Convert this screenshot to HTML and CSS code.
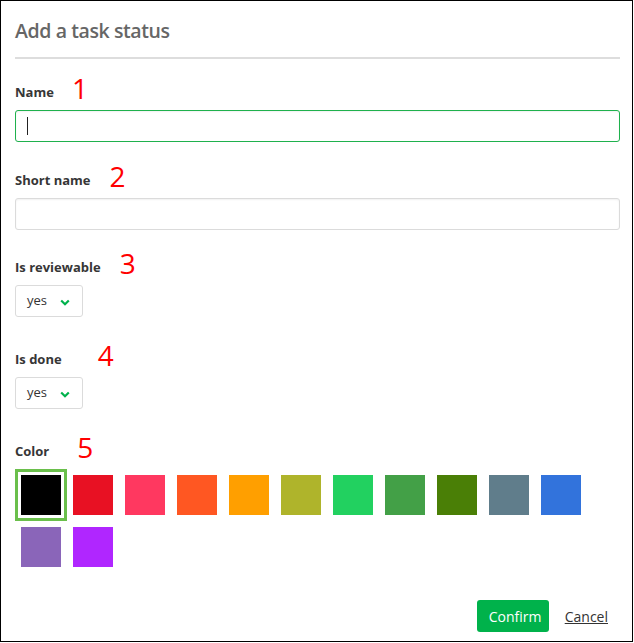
FILE: index.html
```html
<!DOCTYPE html>
<html lang="en">
<head>
<meta charset="utf-8">
<title>Add a task status</title>
<link rel="stylesheet" href="styles.css">
</head>
<body>
<div class="dialog">
  <header class="dialog-header">
    <h1 class="dialog-title">Add a task status</h1>
  </header>

  <div class="field field-text">
    <div class="label-row"><span class="label">Name</span><span class="mark mark-1">1</span></div>
    <div class="input input-focused"><span class="caret"></span></div>
  </div>

  <div class="field field-text">
    <div class="label-row"><span class="label">Short name</span><span class="mark mark-2">2</span></div>
    <div class="input"></div>
  </div>

  <div class="field field-select">
    <div class="label-row"><span class="label">Is reviewable</span><span class="mark mark-3">3</span></div>
    <div class="select"><span class="select-value">yes</span>
      <svg class="chevron" width="10" height="7" viewBox="0 0 10 7"><path d="M1.2 1.5 L5 5.2 L8.8 1.5" fill="none" stroke="#00b24c" stroke-width="2.2"/></svg>
    </div>
  </div>

  <div class="field field-select">
    <div class="label-row"><span class="label">Is done</span><span class="mark mark-4">4</span></div>
    <div class="select"><span class="select-value">yes</span>
      <svg class="chevron" width="10" height="7" viewBox="0 0 10 7"><path d="M1.2 1.5 L5 5.2 L8.8 1.5" fill="none" stroke="#00b24c" stroke-width="2.2"/></svg>
    </div>
  </div>

  <div class="field field-color">
    <div class="label-row"><span class="label">Color</span><span class="mark mark-5">5</span></div>
    <div class="swatches">
      <div class="swatch selected"><span class="chip c-black"></span></div>
      <div class="swatch"><span class="chip c-red"></span></div>
      <div class="swatch"><span class="chip c-pink"></span></div>
      <div class="swatch"><span class="chip c-orange"></span></div>
      <div class="swatch"><span class="chip c-amber"></span></div>
      <div class="swatch"><span class="chip c-olive"></span></div>
      <div class="swatch"><span class="chip c-green"></span></div>
      <div class="swatch"><span class="chip c-mgreen"></span></div>
      <div class="swatch"><span class="chip c-dgreen"></span></div>
      <div class="swatch"><span class="chip c-slate"></span></div>
      <div class="swatch"><span class="chip c-blue"></span></div>
      <div class="swatch"><span class="chip c-purple"></span></div>
      <div class="swatch"><span class="chip c-violet"></span></div>
    </div>
  </div>

  <footer class="dialog-footer">
    <button class="btn btn-confirm">Confirm</button>
    <button class="btn btn-cancel">Cancel</button>
  </footer>
</div>
</body>
</html>
```

FILE: styles.css
```css
html, body {
  margin: 0;
  padding: 0;
  background: #fff;
}

body {
  font-family: "Open Sans", "Noto Sans", sans-serif;
  color: #333;
}

.dialog {
  box-sizing: border-box;
  width: 633px;
  height: 642px;
  border: 1px solid #000;
  padding: 0 12px 0 14px;
  display: flex;
  flex-direction: column;
}

.dialog-header {
  padding-top: 16px;
  padding-bottom: 12px;
  border-bottom: 2px solid #dddddd;
}

.dialog-title {
  margin: 0;
  font-size: 19.5px;
  line-height: 28px;
  font-weight: 600;
  letter-spacing: -0.4px;
  color: #666;
}

.field-text {
  margin-top: 23px;
}

.field-text + .field-text {
  margin-top: 28px;
}

.field-select {
  margin-top: 27px;
}

.field-select + .field-select {
  margin-top: 32px;
}

.field-color {
  margin-top: 32px;
}

.label-row {
  display: flex;
  align-items: baseline;
  height: 20px;
  margin-bottom: 8px;
}

.label {
  font-size: 13px;
  line-height: 20px;
  font-weight: 700;
  color: #363636;
}

.mark {
  font-size: 28px;
  line-height: 0;
  color: #ff0000;
  font-weight: 400;
  position: relative;
  top: 2px;
}

.mark-1 { margin-left: 18px; }
.mark-2 { margin-left: 19px; }
.mark-3 { margin-left: 19px; }
.mark-4 { margin-left: 36px; }
.mark-5 { margin-left: 28px; }

.input {
  box-sizing: border-box;
  height: 32px;
  border: 1px solid #dbdbdb;
  border-radius: 3px;
  box-shadow: inset 0 1px 2px rgba(10, 10, 10, 0.06);
  display: flex;
  align-items: center;
  padding-left: 11px;
}

.input-focused {
  border-color: #1fb14d;
}

.caret {
  width: 1px;
  height: 18px;
  background: #222;
}

.select {
  box-sizing: border-box;
  width: 68px;
  height: 32px;
  border: 1px solid #dbdbdb;
  border-radius: 3px;
  display: flex;
  align-items: center;
  padding-left: 11px;
  gap: 13px;
}

.select-value {
  font-size: 13px;
  color: #333;
  position: relative;
  top: -1px;
}

.chevron {
  display: block;
  margin-top: 3px;
}

.swatches {
  display: flex;
  flex-wrap: wrap;
}

.swatch {
  box-sizing: border-box;
  width: 52px;
  height: 52px;
  padding: 3px;
  border: 3px solid transparent;
}

.swatch.selected {
  border-color: #6abf4b;
}

.chip {
  display: block;
  width: 40px;
  height: 40px;
}

.c-black { background: #000000; }
.c-red { background: #e81123; }
.c-pink { background: #ff3860; }
.c-orange { background: #ff5722; }
.c-amber { background: #ff9f00; }
.c-olive { background: #afb42b; }
.c-green { background: #22d160; }
.c-mgreen { background: #43a047; }
.c-dgreen { background: #4a7f06; }
.c-slate { background: #607d8b; }
.c-blue { background: #3273dc; }
.c-purple { background: #8a65b9; }
.c-violet { background: #b026ff; }

.dialog-footer {
  margin-top: 27px;
  display: flex;
  justify-content: flex-end;
  gap: 4px;
}

.btn {
  font-family: "Open Sans", "Noto Sans", sans-serif;
  font-size: 14px;
  height: 32px;
  border: none;
  border-radius: 3px;
  background: transparent;
  padding: 0 12px;
  cursor: pointer;
}

.btn-confirm {
  background: #00b24b;
  color: #fff;
  width: 72px;
}

.btn-cancel {
  color: #333;
  text-decoration: underline;
}
```
